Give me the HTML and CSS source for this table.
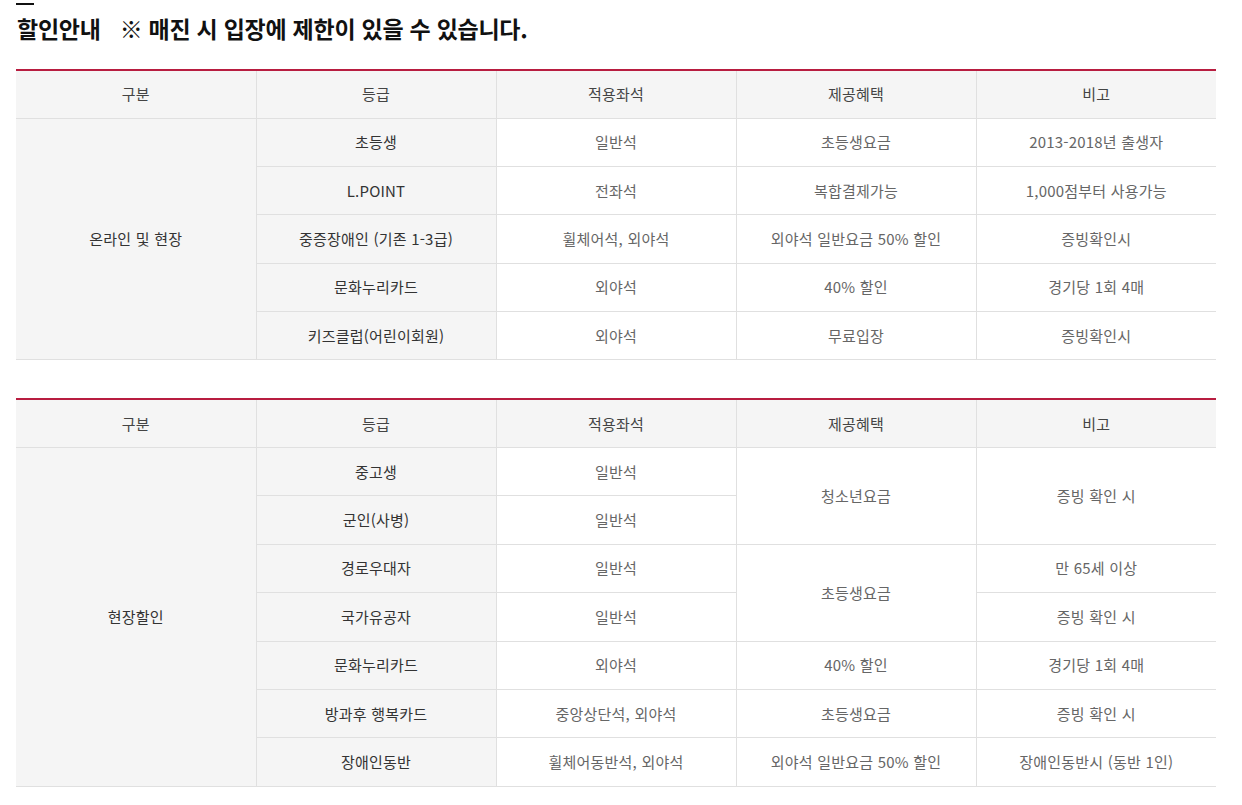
FILE: index.html
```html
<!DOCTYPE html>
<html lang="ko">
<head>
<meta charset="utf-8">
<title>할인안내</title>
<link rel="stylesheet" href="styles.css">
</head>
<body>
<div class="page">
  <div class="topline"></div>
  <h2 class="title"><span class="title-main">할인안내</span><span class="title-note">※ 매진 시 입장에 제한이 있을 수 있습니다.</span></h2>

  <table class="disc">
    <colgroup><col><col><col><col><col></colgroup>
    <thead>
      <tr><th>구분</th><th>등급</th><th>적용좌석</th><th>제공혜택</th><th>비고</th></tr>
    </thead>
    <tbody>
      <tr><td class="gray" rowspan="5">온라인 및 현장</td><td class="gray">초등생</td><td>일반석</td><td>초등생요금</td><td>2013-2018년 출생자</td></tr>
      <tr><td class="gray">L.POINT</td><td>전좌석</td><td>복합결제가능</td><td>1,000점부터 사용가능</td></tr>
      <tr><td class="gray">중증장애인 (기존 1-3급)</td><td>휠체어석, 외야석</td><td>외야석 일반요금 50% 할인</td><td>증빙확인시</td></tr>
      <tr><td class="gray">문화누리카드</td><td>외야석</td><td>40% 할인</td><td>경기당 1회 4매</td></tr>
      <tr><td class="gray">키즈클럽(어린이회원)</td><td>외야석</td><td>무료입장</td><td>증빙확인시</td></tr>
    </tbody>
  </table>

  <table class="disc second">
    <colgroup><col><col><col><col><col></colgroup>
    <thead>
      <tr><th>구분</th><th>등급</th><th>적용좌석</th><th>제공혜택</th><th>비고</th></tr>
    </thead>
    <tbody>
      <tr><td class="gray" rowspan="7">현장할인</td><td class="gray">중고생</td><td>일반석</td><td rowspan="2">청소년요금</td><td rowspan="2">증빙 확인 시</td></tr>
      <tr><td class="gray">군인(사병)</td><td>일반석</td></tr>
      <tr><td class="gray">경로우대자</td><td>일반석</td><td rowspan="2">초등생요금</td><td>만 65세 이상</td></tr>
      <tr><td class="gray">국가유공자</td><td>일반석</td><td>증빙 확인 시</td></tr>
      <tr><td class="gray">문화누리카드</td><td>외야석</td><td>40% 할인</td><td>경기당 1회 4매</td></tr>
      <tr><td class="gray">방과후 행복카드</td><td>중앙상단석, 외야석</td><td>초등생요금</td><td>증빙 확인 시</td></tr>
      <tr><td class="gray">장애인동반</td><td>휠체어동반석, 외야석</td><td>외야석 일반요금 50% 할인</td><td>장애인동반시 (동반 1인)</td></tr>
    </tbody>
  </table>
</div>
</body>
</html>
```
FILE: styles.css
```css
html, body {
  margin: 0;
  padding: 0;
  background: #fff;
}
body {
  font-family: "Noto Sans CJK KR", "Noto Sans", sans-serif;
  color: #666;
}
.page {
  padding: 3px 26px 0 16px;
  width: 1200px;
}
.topline {
  width: 18px;
  height: 2px;
  background: #111;
}
.title {
  margin: 7px 0 0 1px;
  font-size: 23px;
  line-height: 32px;
  font-weight: 700;
  color: #111;
  letter-spacing: -0.25px;
}
.title-main {
  margin-right: 19px;
}
.disc {
  width: 1200px;
  border-collapse: collapse;
  table-layout: fixed;
  margin-top: 25px;
  border-top: 2px solid #b81d40;
}
.disc.second {
  margin-top: 38px;
}
.disc col {
  width: 240px;
}
.disc th,
.disc td {
  height: 48.4px;
  padding: 0 6px;
  box-sizing: border-box;
  text-align: center;
  vertical-align: middle;
  font-size: 15px;
  line-height: 20px;
  letter-spacing: 0.2px;
  border: 1px solid #e0e0e0;
  border-top: 0;
}
.disc th:first-child,
.disc td.gray[rowspan] {
  border-left: 0;
}
.disc th:last-child,
.disc tr > td:last-child {
  border-right: 0;
}
.disc th {
  background: #f5f5f5;
  color: #444;
  font-weight: 400;
  height: 48px;
}
.disc td {
  background: #fff;
  color: #666;
}
.disc td.gray {
  background: #f5f5f5;
  color: #333;
}
```
